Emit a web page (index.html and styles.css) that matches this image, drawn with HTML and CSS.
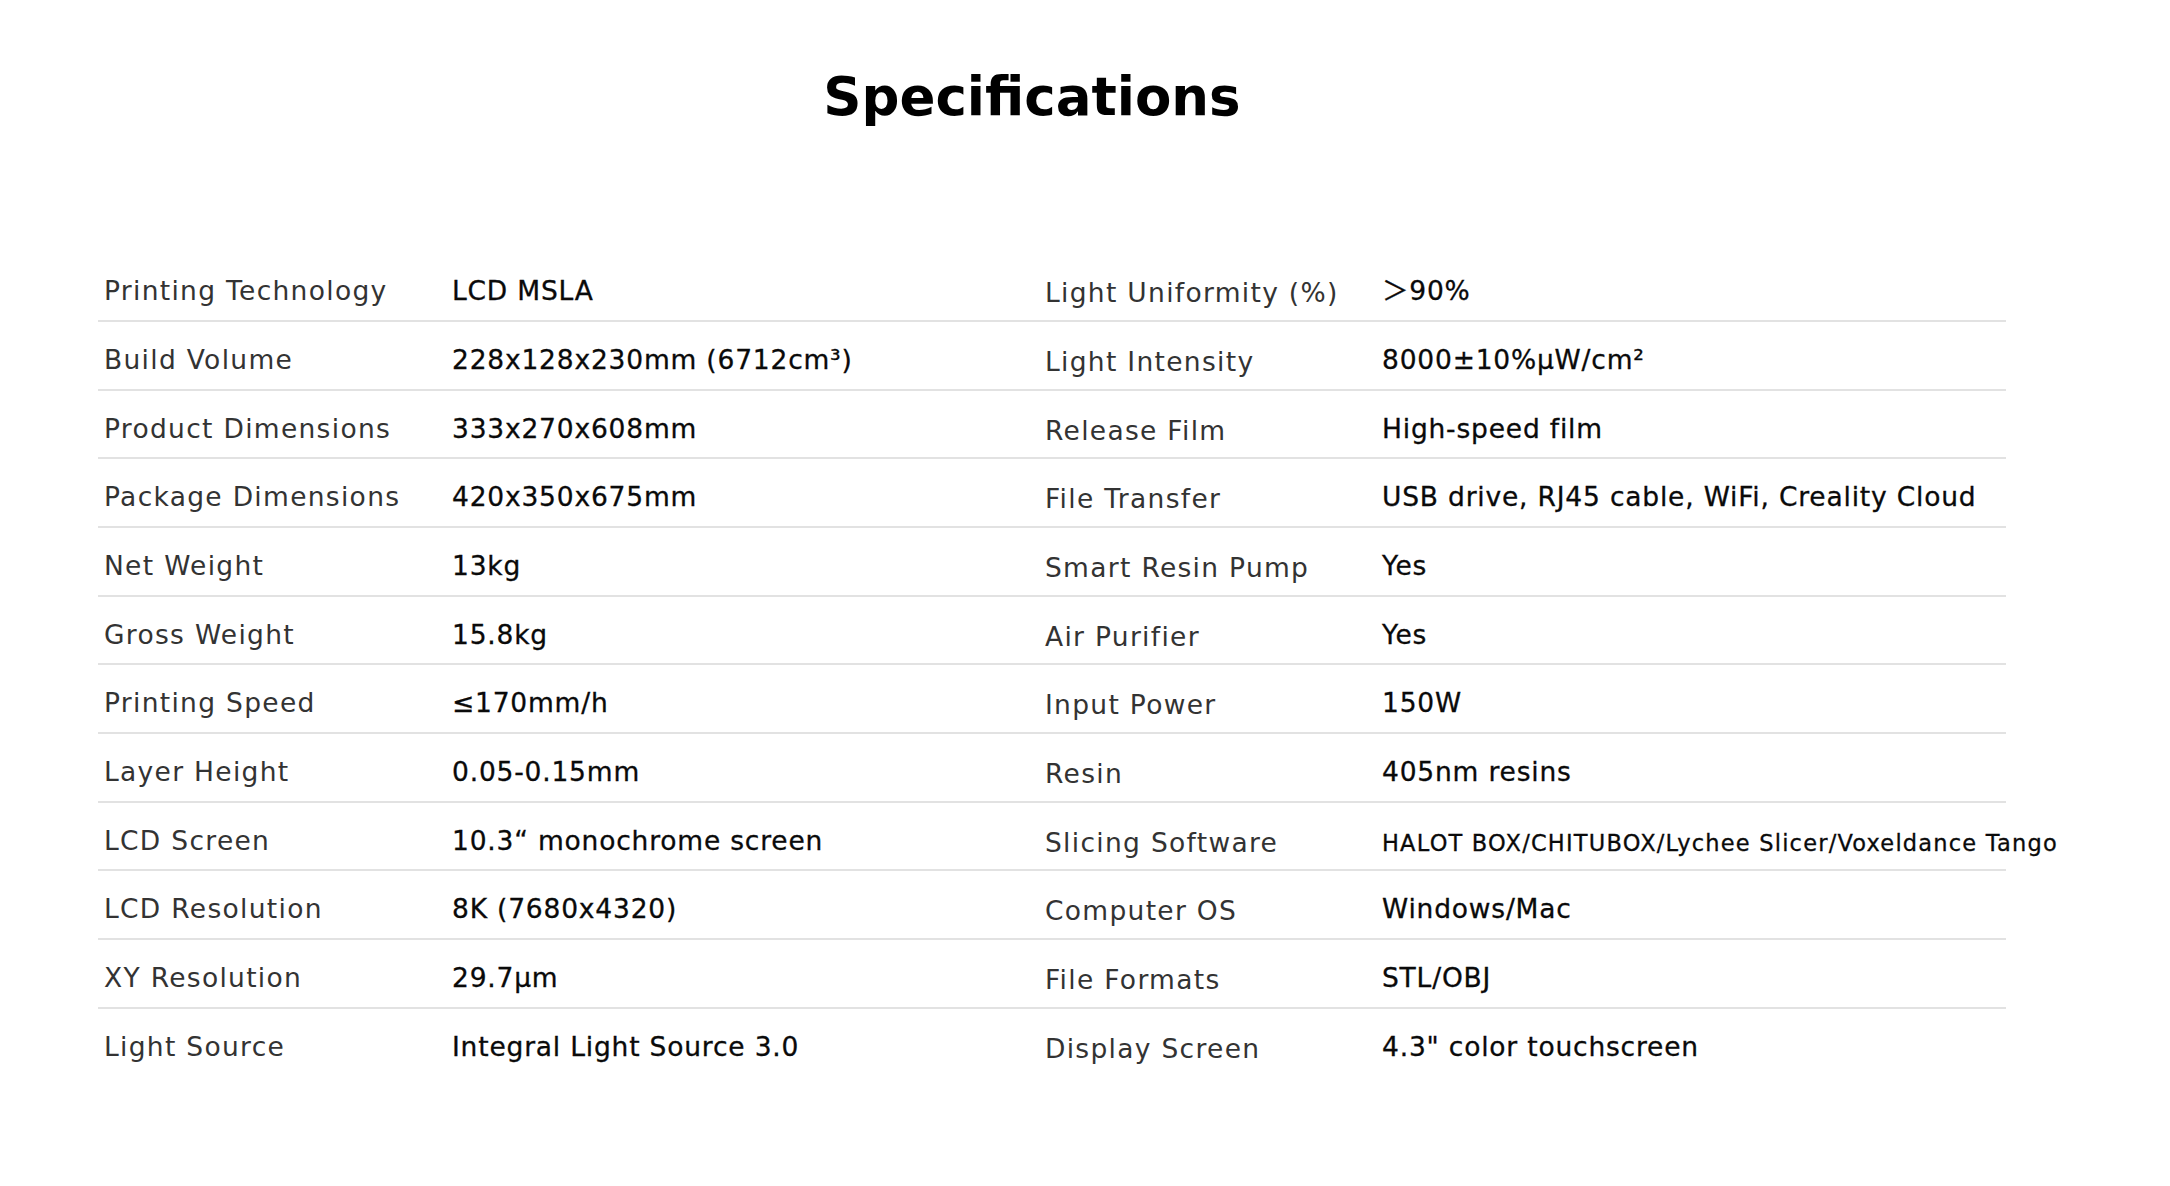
FILE: index.html
```html
<!DOCTYPE html>
<html lang="en">
<head>
<meta charset="utf-8">
<title>Specifications</title>
<link rel="stylesheet" href="styles.css">
</head>
<body>
<section class="specs">
  <h1 class="specs-title">Specifications</h1>
  <div class="specs-table">
    <div class="row"><span class="label">Printing Technology</span><span class="value">LCD MSLA</span><span class="label label-r">Light Uniformity (%)</span><span class="value">＞90%</span></div>
    <div class="row"><span class="label">Build Volume</span><span class="value">228x128x230mm (6712cm³)</span><span class="label label-r">Light Intensity</span><span class="value">8000±10%μW/cm²</span></div>
    <div class="row"><span class="label">Product Dimensions</span><span class="value">333x270x608mm</span><span class="label label-r">Release Film</span><span class="value">High-speed film</span></div>
    <div class="row"><span class="label">Package Dimensions</span><span class="value">420x350x675mm</span><span class="label label-r">File Transfer</span><span class="value">USB drive, RJ45 cable, WiFi, Creality Cloud</span></div>
    <div class="row"><span class="label">Net Weight</span><span class="value">13kg</span><span class="label label-r">Smart Resin Pump</span><span class="value">Yes</span></div>
    <div class="row"><span class="label">Gross Weight</span><span class="value">15.8kg</span><span class="label label-r">Air Purifier</span><span class="value">Yes</span></div>
    <div class="row"><span class="label">Printing Speed</span><span class="value">≤170mm/h</span><span class="label label-r">Input Power</span><span class="value">150W</span></div>
    <div class="row"><span class="label">Layer Height</span><span class="value">0.05-0.15mm</span><span class="label label-r">Resin</span><span class="value">405nm resins</span></div>
    <div class="row"><span class="label">LCD Screen</span><span class="value">10.3“ monochrome screen</span><span class="label label-r">Slicing Software</span><span class="value value-small">HALOT BOX/CHITUBOX/Lychee Slicer/Voxeldance Tango</span></div>
    <div class="row"><span class="label">LCD Resolution</span><span class="value">8K (7680x4320)</span><span class="label label-r">Computer OS</span><span class="value">Windows/Mac</span></div>
    <div class="row"><span class="label">XY Resolution</span><span class="value">29.7μm</span><span class="label label-r">File Formats</span><span class="value">STL/OBJ</span></div>
    <div class="row row-last"><span class="label">Light Source</span><span class="value">Integral Light Source 3.0</span><span class="label label-r">Display Screen</span><span class="value">4.3" color touchscreen</span></div>
  </div>
</section>
</body>
</html>
```

FILE: styles.css
```css
html, body {
  margin: 0;
  padding: 0;
  background: #ffffff;
}

body {
  font-family: "DejaVu Sans", "Noto Sans CJK SC", sans-serif;
  color: #111111;
}

.specs {
  padding: 65px 0 0 98px;
}

.specs-title {
  margin: 0;
  width: 1868px;
  text-align: center;
  font-size: 53px;
  line-height: 64px;
  font-weight: 700;
  color: #000000;
  letter-spacing: 0;
}

.specs-table {
  margin-top: 124.3px;
  width: 1908px;
}

.row {
  display: grid;
  grid-template-columns: 348px 593px 337px 630px;
  align-items: start;
  height: 66.7px;
  border-bottom: 2px solid #e2e2e2;
  box-sizing: content-box;
}

.row-last {
  border-bottom-color: transparent;
}

.label,
.value {
  padding: 22px 0 0 6px;
  line-height: 32px;
  white-space: nowrap;
}

.label {
  font-size: 26.5px;
  letter-spacing: 1.3px;
  color: #333333;
  font-weight: 400;
}

.label-r {
  padding-top: 24px;
}

.value {
  font-size: 26.5px;
  letter-spacing: 0.8px;
  color: #0a0a0a;
  font-weight: 400;
  -webkit-text-stroke: 0.3px #0a0a0a;
}

.value-small {
  font-size: 22.5px;
  letter-spacing: 1.2px;
  padding-top: 24px;
}
```
